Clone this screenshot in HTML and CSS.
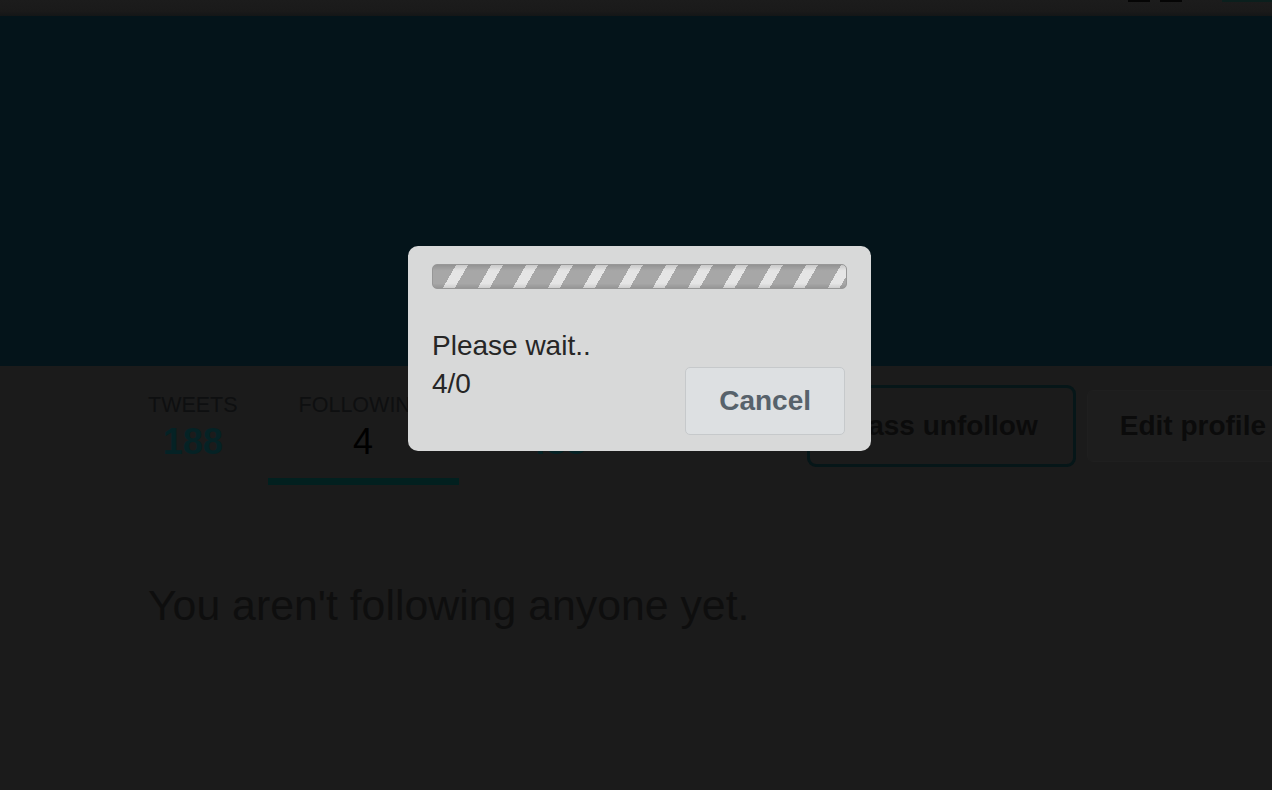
FILE: index.html
```html
<!DOCTYPE html>
<html lang="en">
<head>
<meta charset="utf-8">
<title>Profile</title>
<link rel="stylesheet" href="styles.css">
</head>
<body>
<div class="page">
  <div class="topbar">
    <span class="top-icon"></span>
    <span class="top-icon"></span>
    <span class="top-teal"></span>
  </div>
  <div class="header"></div>
  <div class="navrow">
    <ul class="stats">
      <li class="stat">
        <span class="label">Tweets</span>
        <span class="value value-teal">188</span>
      </li>
      <li class="stat active">
        <span class="label">Following</span>
        <span class="value value-dark">4</span>
      </li>
      <li class="stat">
        <span class="label">Followers</span>
        <span class="value value-teal">488</span>
      </li>
    </ul>
    <div class="actions">
      <button class="btn btn-mass">Mass unfollow</button>
      <button class="btn btn-edit">Edit profile</button>
    </div>
  </div>
  <div class="content">
    <p class="empty">You aren't following anyone yet.</p>
  </div>
</div>

<div class="dialog">
  <div class="progress"></div>
  <div class="dialog-row">
    <div class="dialog-text">
      <div>Please wait..</div>
      <div>4/0</div>
    </div>
    <button class="cancel">Cancel</button>
  </div>
</div>
</body>
</html>
```

FILE: styles.css
```css
html, body {
  margin: 0;
  padding: 0;
  background: #1b1b1b;
  width: 1272px;
  height: 790px;
  overflow: hidden;
  font-family: "Liberation Sans", Arial, sans-serif;
}

.page {
  width: 1300px;
}

.topbar {
  height: 16px;
  background: linear-gradient(#1c1c1c, #1a1a1a 70%, #141617);
  display: flex;
  align-items: flex-start;
  justify-content: flex-end;
  gap: 10px;
  padding-right: 28px;
}

.top-icon {
  width: 22px;
  height: 2px;
  background: #050505;
}

.top-teal {
  width: 50px;
  height: 2px;
  margin-left: 30px;
  background: #0b1f1d;
}

.header {
  height: 350px;
  background: #04141a;
}

.navrow {
  display: flex;
  align-items: flex-start;
  padding-left: 118px;
  padding-right: 1px;
}

.stats {
  list-style: none;
  margin: 0;
  padding: 0;
  display: flex;
}

.stat {
  display: flex;
  flex-direction: column;
  align-items: center;
  padding: 26px 30px 16px;
  border-bottom: 7px solid transparent;
}

.stat.active {
  padding-left: 31px;
  padding-right: 31px;
  border-bottom-color: #02201f;
}

.label {
  font-size: 21.5px;
  line-height: 26px;
  text-transform: uppercase;
  color: #0e0f10;
}

.value {
  margin-top: 4px;
  font-size: 36px;
  line-height: 40px;
  font-weight: bold;
}

.value-teal {
  color: #052225;
}

.value-dark {
  color: #000;
  font-weight: normal;
}

.actions {
  margin-left: auto;
  margin-top: 19px;
  display: flex;
  align-items: center;
  gap: 11px;
}

.btn {
  font-family: "Liberation Sans", Arial, sans-serif;
  font-size: 28px;
  font-weight: bold;
  line-height: 32px;
  color: #0b0b0b;
  background: #1b1b1b;
  cursor: pointer;
}

.btn-mass {
  height: 82px;
  padding: 0 35px;
  border: 3px solid #061618;
  border-radius: 9px;
}

.btn-edit {
  height: 72px;
  padding: 0 32px;
  border: 1px solid #1f1f1f;
  background: #1d1d1d;
  border-radius: 6px;
}

.content {
  padding: 95px 0 0 148px;
}

.empty {
  margin: 0;
  font-size: 42.8px;
  line-height: 50px;
  color: #0e0e0e;
}

.dialog {
  position: absolute;
  left: 408px;
  top: 246px;
  width: 463px;
  box-sizing: border-box;
  padding: 18px 24px 16px;
  background: #d8d9d9;
  border-radius: 10px;
}

.progress {
  height: 25px;
  box-sizing: border-box;
  border: 1px solid #979797;
  border-radius: 5px;
  background:
    linear-gradient(rgba(0,0,0,0.12), rgba(0,0,0,0) 25%, rgba(0,0,0,0) 80%, rgba(0,0,0,0.1)),
    repeating-linear-gradient(120deg, #a7a7a7 0 20px, #e5e5e5 20px 30.3px);
}

.dialog-row {
  display: flex;
  justify-content: space-between;
  align-items: flex-start;
  margin-top: 38px;
}

.dialog-text {
  font-size: 28px;
  line-height: 38px;
  color: #262626;
}

.cancel {
  margin-top: 40px;
  margin-right: 2px;
  font-family: "Liberation Sans", Arial, sans-serif;
  font-size: 28px;
  font-weight: bold;
  line-height: 32px;
  padding: 17px 33px;
  color: #57626b;
  background: #dde0e2;
  border: 1px solid #c6c9cb;
  border-radius: 5px;
  cursor: pointer;
}
```
